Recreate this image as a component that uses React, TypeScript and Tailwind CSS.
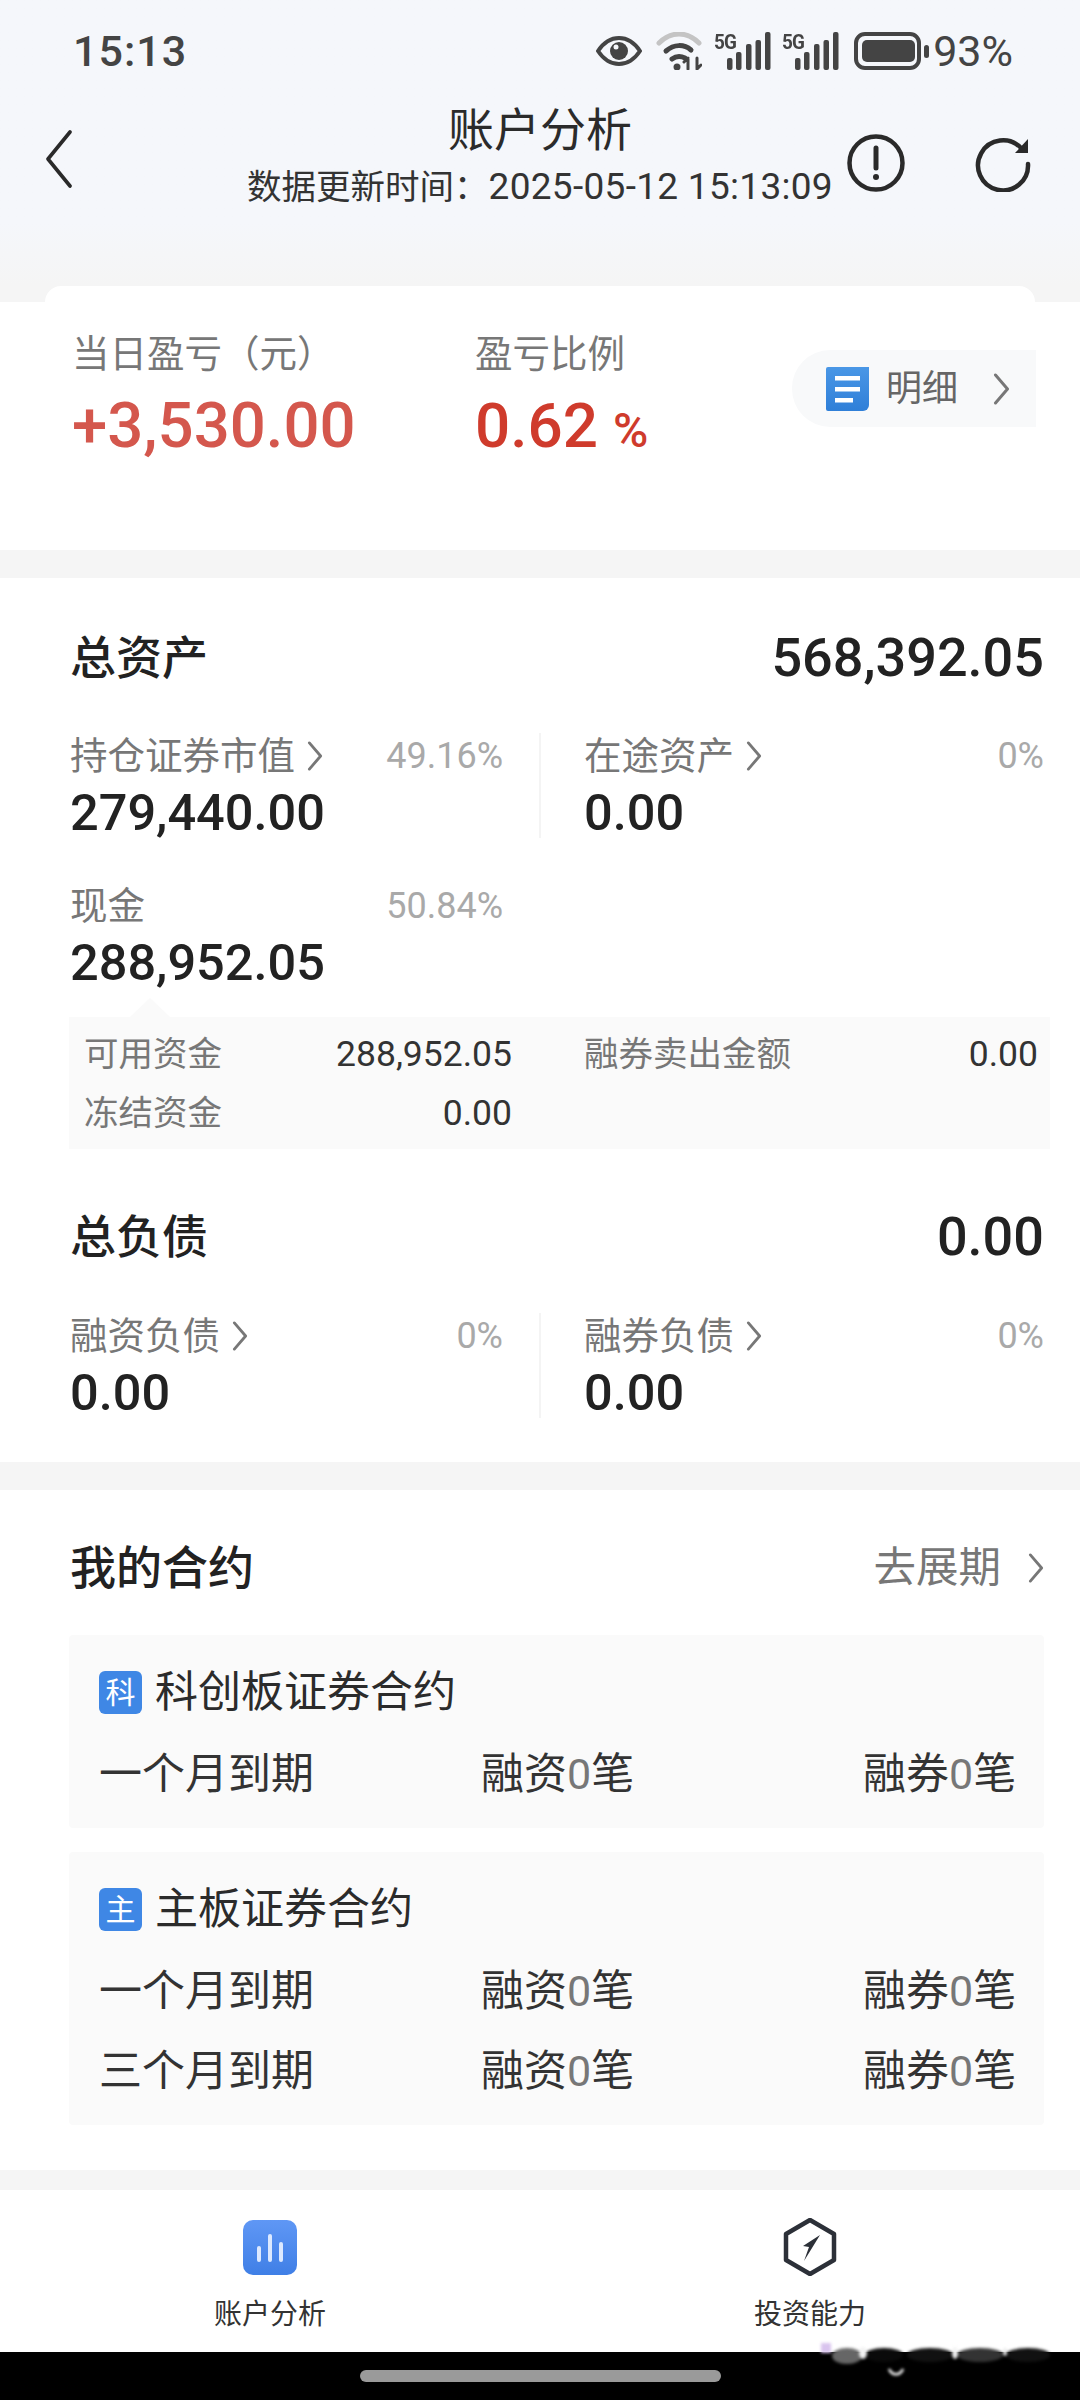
import React from 'react'

const cjk = "font-['Roboto','Noto_Sans_CJK_SC',sans-serif]"

function Chevron({ className = 'w-[16px] h-[32px]', color = '#777' }: { className?: string; color?: string }) {
  return (
    <svg viewBox="0 0 16 32" className={className} fill="none" stroke={color} strokeWidth="3" strokeLinecap="round" strokeLinejoin="round">
      <path d="M2 2l12 14L2 30" />
    </svg>
  )
}

function Bars() {
  return (
    <svg viewBox="0 0 44 38" className="w-[44px] h-[38px]" fill="#444">
      <rect x="0" y="26" width="5.5" height="12" rx="2" />
      <rect x="9" y="20" width="5.5" height="18" rx="2" />
      <rect x="19" y="12" width="5.5" height="26" rx="2" />
      <rect x="38" y="0" width="5.5" height="38" rx="2" />
      <rect x="28.5" y="8" width="5.5" height="30" rx="2" />
    </svg>
  )
}

function Signal() {
  return (
    <div className="relative w-[57px] h-[38px]">
      <span className="absolute left-0 top-[-1px] text-[21px] leading-[22px] font-bold text-[#444] font-['Roboto',sans-serif] tracking-[-1px] scale-x-90 origin-left">5G</span>
      <div className="absolute right-0 top-0">
        <Bars />
      </div>
    </div>
  )
}

function StatusBar() {
  return (
    <div className="h-[100px] pt-[32px] pl-[73px] pr-[67px] flex items-start justify-between">
      <span className="text-[43px] leading-[38px] text-[#444] font-medium font-['Roboto',sans-serif] tracking-[1px]">15:13</span>
      <div className="flex items-center h-[38px]">
        <svg viewBox="0 0 46 30" className="w-[46px] h-[30px]">
          <path d="M2 15C8 6 15 2 23 2s15 4 21 13c-6 9-13 13-21 13S8 24 2 15z" fill="none" stroke="#444" strokeWidth="4" />
          <circle cx="23" cy="15" r="9" fill="#444" />
          <circle cx="20" cy="11" r="2.5" fill="#f5f7fb" />
        </svg>
        <svg viewBox="0 0 46 38" className="w-[46px] h-[38px] ml-[14px]" fill="none" strokeLinecap="round">
          <path d="M3 11C15 -1 31 -1 43 11" stroke="#c4c4c4" strokeWidth="5" />
          <path d="M10 19C18 12 28 12 35 18" stroke="#444" strokeWidth="5" />
          <path d="M16 27c4-3 9-3 13-1" stroke="#444" strokeWidth="5" />
          <circle cx="21" cy="35" r="3.5" fill="#444" />
          <path d="M32 37V27M28 30l4-4M41 26v10M41 37l4-4" stroke="#444" strokeWidth="3" />
        </svg>
        <div className="ml-[12px]">
          <Signal />
        </div>
        <div className="ml-[11px]">
          <Signal />
        </div>
        <div className="ml-[15px] w-[67px] h-[38px] rounded-[11px] border-[4px] border-[#444] p-[4px]">
          <div className="w-[53px] h-full rounded-[5px] bg-[#444]" />
        </div>
        <div className="ml-[3px] w-[5px] h-[13px] rounded-full bg-[#444]" />
        <span className="ml-[4px] text-[43px] leading-[38px] text-[#444] font-['Roboto',sans-serif]">93%</span>
      </div>
    </div>
  )
}

function NavBar() {
  return (
    <div className="grid grid-cols-[1fr_auto_1fr] h-[125px]">
      <div className="pl-[45px] pt-[30px]">
        <svg viewBox="0 0 28 58" className="w-[28px] h-[58px]" fill="none" stroke="#2a2a2a" strokeWidth="3.6" strokeLinecap="round" strokeLinejoin="round">
          <path d="M25 2L3 29l22 27" />
        </svg>
      </div>
      <div className="flex flex-col items-center pt-[3px]">
        <span className="text-[46px] leading-[54px] text-[#2b2b2b]">账户分析</span>
        <span className="mt-[10px] text-[34.5px] leading-[40px] text-[#333] whitespace-nowrap">
          数据更新时间：<span className="text-[37px] tracking-[0.3px]">2025-05-12 15:13:09</span>
        </span>
      </div>
      <div className="flex justify-end items-start pt-[33px] pr-[49px]">
        <svg viewBox="0 0 58 60" className="w-[58px] h-[60px]" fill="none" stroke="#2a2a2a">
          <circle cx="29" cy="30" r="26.5" strokeWidth="4.5" />
          <path d="M29 15v20" strokeWidth="5" strokeLinecap="round" />
          <circle cx="29" cy="44" r="3" fill="#2a2a2a" stroke="none" />
        </svg>
        <svg viewBox="0 0 56 56" className="w-[56px] h-[56px] ml-[70px] mt-[3px]" fill="none" stroke="#2a2a2a" strokeWidth="4.5" strokeLinecap="round">
          <path d="M46 12A25 25 0 1 0 53 28" />
          <path d="M40 17L53 17 53 3z" fill="#2a2a2a" stroke="none" />
        </svg>
      </div>
    </div>
  )
}

function Summary() {
  return (
    <div className="relative h-[248px] bg-white pl-[72px] pt-[30px] flex">
      <div className="w-[403px]">
        <div className="text-[37.5px] leading-[44px] text-[#777] whitespace-nowrap">当日盈亏（元）</div>
        <div className="mt-[14px] text-[63.5px] leading-[72px] font-medium text-[#d4574d]">+3,530.00</div>
      </div>
      <div>
        <div className="text-[37.5px] leading-[44px] text-[#777]">盈亏比例</div>
        <div className="mt-[14px] leading-[72px] font-medium text-[#cf3b2c] flex items-baseline">
          <span className="text-[62px]">0.62</span>
          <span className="text-[48px] ml-[15px]">%</span>
        </div>
      </div>
      <div className="absolute right-[44px] top-[48px] w-[244px] h-[77px] rounded-l-[38px] bg-[#f8f9fa] flex items-center pl-[34px]">
        <svg viewBox="0 0 43 44" className="w-[43px] h-[44px]">
          <defs>
            <linearGradient id="doc" x1="0" y1="0" x2="0" y2="1">
              <stop offset="0" stopColor="#4a97e6" />
              <stop offset="1" stopColor="#2f7fd8" />
            </linearGradient>
          </defs>
          <path d="M0 2a2 2 0 0 1 2-2h41v38a6 6 0 0 1-6 6H2a2 2 0 0 1-2-2z" fill="url(#doc)" />
          <rect x="9" y="9" width="25" height="4.5" fill="#fff" />
          <rect x="9" y="20" width="25" height="4.5" fill="#fff" />
          <rect x="9" y="31" width="18" height="4.5" fill="#fff" />
        </svg>
        <span className="ml-[17px] text-[36px] leading-[44px] text-[#666]">明细</span>
        <Chevron className="ml-[35px] w-[17px] h-[32px]" color="#777" />
      </div>
    </div>
  )
}

function Metric({ label, pct, value, arrow = true, divider = false, tone = 'text-[#777]' }: { label: string; pct: string; value: string; arrow?: boolean; divider?: boolean; tone?: string }) {
  return (
    <div className={`h-[105px] flex flex-col ${divider ? 'border-l-2 border-[#f4f4f4] pl-[43px]' : ''}`}>
      <div className="h-[46px] flex items-center">
        <span className={`text-[37.5px] leading-[46px] whitespace-nowrap ${tone}`}>{label}</span>
        {arrow && <Chevron className="ml-[12px] w-[16px] h-[30px]" />}
        <span className="ml-auto text-[36px] leading-[46px] text-[#a9a9a9]">{pct}</span>
      </div>
      <div className="mt-[9px] text-[50.5px] leading-[50px] font-medium text-[#222]">{value}</div>
    </div>
  )
}

function SubRow({ label, value }: { label: string; value: string }) {
  return (
    <div className="flex items-center justify-between h-[59px]">
      <span className="text-[34.5px] text-[#777] whitespace-nowrap">{label}</span>
      <span className="text-[35.5px] text-[#333]">{value}</span>
    </div>
  )
}

function Assets() {
  return (
    <div className="h-[884px] bg-white pr-[36px] pl-[70px] pt-[54px]">
      <div className="flex items-center justify-between h-[52px]">
        <span className="text-[46px] leading-[52px] font-medium text-[#222]">总资产</span>
        <span className="text-[54px] leading-[52px] font-medium text-[#222]">568,392.05</span>
      </div>
      <div className="mt-[49px] grid grid-cols-[469px_1fr]">
        <div className="pr-[36px]">
          <Metric label="持仓证券市值" pct="49.16%" value="279,440.00" />
        </div>
        <Metric label="在途资产" pct="0%" value="0.00" divider />
      </div>
      <div className="mt-[45px] w-[433px] relative">
        <Metric label="现金" pct="50.84%" value="288,952.05" arrow={false} />
      </div>
      <div className="relative -ml-[1px] -mr-[6px] mt-[29px] h-[132px] bg-[#fafafa] pt-[8px] pl-[15px] pr-[12px] grid grid-cols-[428px_1fr] gap-x-[72px]">
        <div className="absolute left-[61px] top-[-19px] w-0 h-0 border-x-[20px] border-x-transparent border-b-[19px] border-b-[#fafafa]" />
        <div>
          <SubRow label="可用资金" value="288,952.05" />
          <SubRow label="冻结资金" value="0.00" />
        </div>
        <div>
          <SubRow label="融券卖出金额" value="0.00" />
        </div>
      </div>
      <div className="mt-[62px] flex items-center justify-between h-[52px]">
        <span className="text-[46px] leading-[52px] font-medium text-[#222]">总负债</span>
        <span className="text-[54px] leading-[52px] font-medium text-[#222]">0.00</span>
      </div>
      <div className="mt-[50px] grid grid-cols-[469px_1fr]">
        <div className="pr-[36px]">
          <Metric label="融资负债" pct="0%" value="0.00" />
        </div>
        <Metric label="融券负债" pct="0%" value="0.00" divider />
      </div>
    </div>
  )
}

function ContractRow({ label }: { label: string }) {
  return (
    <div className="grid grid-cols-[382px_382px_1fr] h-[80px] items-center text-[43px] leading-[50px] text-[#333]">
      <span>{label}</span>
      <span>融资<span className="text-[#777]">0</span>笔</span>
      <span>融券<span className="text-[#777]">0</span>笔</span>
    </div>
  )
}

function ContractCard({ badge, title, rows, className }: { badge: string; title: string; rows: string[]; className?: string }) {
  return (
    <div className={`bg-[#fafafa] rounded-[4px] pl-[30px] pt-[35px] ${className}`}>
      <div className="flex items-center h-[44px]">
        <span className="w-[43px] h-[43px] rounded-[6px] bg-[#3f87e5] text-white text-[30px] leading-[43px] text-center">{badge}</span>
        <span className="ml-[13px] text-[43px] leading-[44px] text-[#2b2b2b]">{title}</span>
      </div>
      <div className="mt-[20px]">
        {rows.map((r) => (
          <ContractRow key={r} label={r} />
        ))}
      </div>
    </div>
  )
}

function Contracts() {
  return (
    <div className="h-[680px] bg-white pl-[69px] pr-[36px] pt-[52px]">
      <div className="flex items-center h-[52px] pl-[1px]">
        <span className="text-[46px] leading-[52px] font-medium text-[#222]">我的合约</span>
        <span className="ml-auto text-[42.5px] leading-[52px] text-[#777]">去展期</span>
        <Chevron className="ml-[27px] w-[16px] h-[30px]" />
      </div>
      <ContractCard badge="科" title="科创板证券合约" rows={['一个月到期']} className="mt-[41px] h-[193px]" />
      <ContractCard badge="主" title="主板证券合约" rows={['一个月到期', '三个月到期']} className="mt-[24px] h-[273px]" />
    </div>
  )
}

function TabBar() {
  return (
    <div className="h-[162px] bg-white grid grid-cols-2">
      <div className="flex flex-col items-center pt-[30px]">
        <div className="w-[54px] h-[55px] rounded-[10px] bg-gradient-to-b from-[#5f97f5] to-[#3f7fe6] flex items-end justify-center gap-[7px] pb-[13px]">
          <div className="w-[4px] h-[16px] rounded-full bg-[#dce9ff]" />
          <div className="w-[4px] h-[28px] rounded-full bg-[#dce9ff]" />
          <div className="w-[4px] h-[20px] rounded-full bg-[#dce9ff]" />
        </div>
        <span className="mt-[22px] text-[28px] leading-[36px] text-[#333]">账户分析</span>
      </div>
      <div className="flex flex-col items-center pt-[28px]">
        <svg viewBox="0 0 54 58" className="w-[54px] h-[58px]" fill="none">
          <path d="M27 2L51 16v26L27 56 3 42V16z" stroke="#2c3038" strokeWidth="4.5" strokeLinejoin="round" />
          <path d="M37 17L20 28l6 1-5 14 16-26z" fill="#2c3038" />
        </svg>
        <span className="mt-[21px] text-[28px] leading-[36px] text-[#333]">投资能力</span>
      </div>
    </div>
  )
}

export default function App() {
  return (
    <div className={`relative w-[1080px] h-[2400px] overflow-hidden bg-[#f5f5f5] ${cjk}`}>
      <div className="h-[286px] bg-gradient-to-b from-[#f5f7fb] from-[78%] to-[#f5f5f5]">
        <StatusBar />
        <NavBar />
      </div>
      <div className="mx-[45px] h-[16px] rounded-t-[20px] bg-white" />
      <Summary />
      <div className="h-[28px]" />
      <Assets />
      <div className="h-[28px]" />
      <Contracts />
      <div className="h-[20px]" />
      <TabBar />
      <div className="h-[48px] bg-black flex justify-center pt-[18px]">
        <div className="w-[361px] h-[12px] rounded-full bg-[#9a9a9a]" />
      </div>
      {/* blurred watermark smudge over the bottom edge */}
      <svg viewBox="0 0 236 44" className="absolute left-[820px] top-[2342px] w-[236px] h-[44px] blur-[1.5px]">
        <rect x="1" y="1" width="10" height="10" fill="#d9c4ee" />
        <ellipse cx="27" cy="14" rx="15" ry="8" fill="#666" />
        <ellipse cx="64" cy="13" rx="19" ry="7" fill="#0a0a0a" />
        <ellipse cx="110" cy="13" rx="23" ry="7" fill="#111" />
        <ellipse cx="160" cy="13" rx="23" ry="7" fill="#333" />
        <ellipse cx="208" cy="13" rx="22" ry="7" fill="#111" />
        <ellipse cx="43" cy="11" rx="4" ry="6" fill="#f2f2f2" />
        <ellipse cx="135" cy="11" rx="3" ry="6" fill="#f2f2f2" />
        <ellipse cx="185" cy="10" rx="2" ry="4" fill="#e8e8e8" />
        <path d="M69 27c3 7 11 7 14 0" fill="none" stroke="#fff" strokeWidth="2.5" />
      </svg>
    </div>
  )
}
